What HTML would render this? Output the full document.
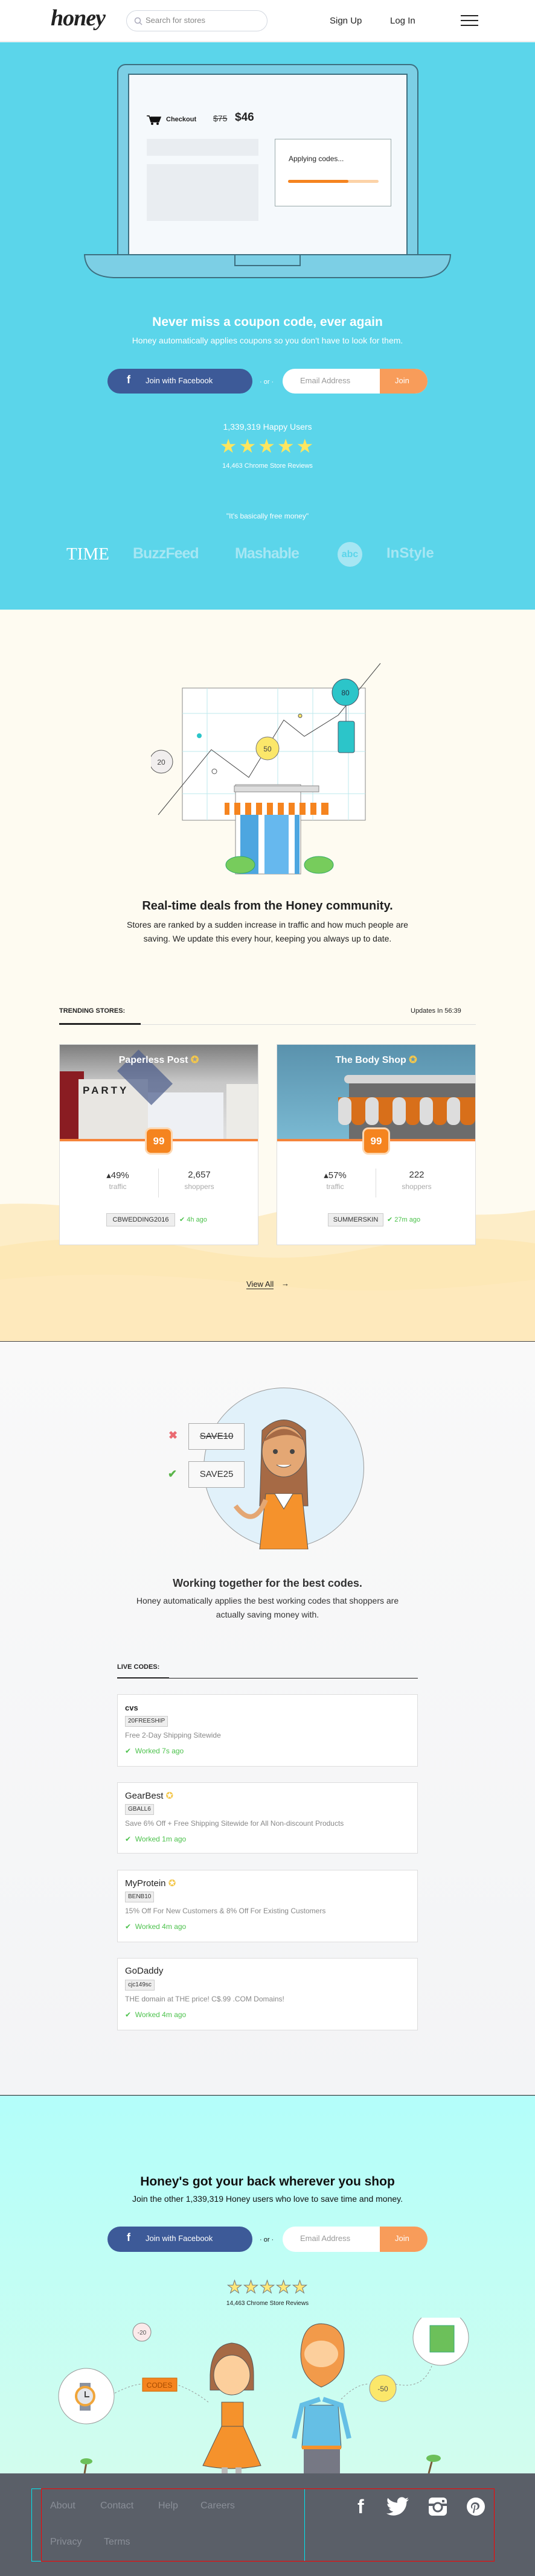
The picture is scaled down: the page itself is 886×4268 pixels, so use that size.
<!DOCTYPE html>
<html><head><meta charset="utf-8"><style>
*{margin:0;padding:0;box-sizing:border-box}
body{width:886px;height:4268px;position:relative;font-family:"Liberation Sans",sans-serif;background:#fff;overflow:hidden;color:#333}
.a{position:absolute}
.c{text-align:center;left:0;width:886px}
</style></head><body>

<!-- HEADER -->
<div class="a" style="left:0;top:0;width:886px;height:69px;background:#fff;border-bottom:1px solid #e2e2e2"></div>
<div class="a" style="left:84px;top:8px;font-family:'Liberation Serif',serif;font-style:italic;font-weight:bold;font-size:38px;color:#222;letter-spacing:-1px">honey</div>
<div class="a" style="left:209px;top:17px;width:234px;height:35px;border:1px solid #d3d8e0;border-radius:18px"></div>
<svg class="a" style="left:222px;top:28px" width="14" height="14"><circle cx="6" cy="6" r="4.5" fill="none" stroke="#aab" stroke-width="1.5"/><line x1="9" y1="9" x2="13" y2="13" stroke="#aab" stroke-width="1.5"/></svg>
<div class="a" style="left:241px;top:26px;font-size:13px;color:#888">Search for stores</div>
<div class="a" style="left:546px;top:26px;font-size:15px;color:#222">Sign Up</div>
<div class="a" style="left:646px;top:26px;font-size:15px;color:#222">Log In</div>
<div class="a" style="left:763px;top:25px;width:29px;height:2px;background:#222"></div>
<div class="a" style="left:763px;top:33px;width:29px;height:2px;background:#222"></div>
<div class="a" style="left:763px;top:41px;width:29px;height:2px;background:#222"></div>

<!-- HERO -->
<div class="a" style="left:0;top:70px;width:886px;height:940px;background:#5bd5ea"></div>
<div class="a" style="left:194px;top:106px;width:499px;height:320px;background:#7ccfe5;border:2px solid #3d6f80;border-radius:14px 14px 0 0"></div>
<div class="a" style="left:212px;top:122px;width:463px;height:302px;background:#f5f9fc;border:2px solid #3d6f80;border-bottom:none"></div>
<svg class="a" style="left:138px;top:420px" width="612" height="42"><path d="M2 2 H608 Q606 38 560 40 H50 Q4 38 2 2Z" fill="#7ccfe5" stroke="#3d6f80" stroke-width="2"/><rect x="251" y="2" width="108" height="18" fill="#7ccfe5" stroke="#3d6f80" stroke-width="2"/></svg>
<svg class="a" style="left:243px;top:190px" width="24" height="18"><path d="M0 2h4l3 10h13l3-8H6" fill="#111" stroke="#111" stroke-width="1.5"/><circle cx="9" cy="15" r="2" fill="#111"/><circle cx="18" cy="15" r="2" fill="#111"/></svg>
<div class="a" style="left:275px;top:192px;font-size:11px;font-weight:bold;color:#222">Checkout</div>
<div class="a" style="left:353px;top:188px;font-size:14px;color:#333;text-decoration:line-through">$75</div>
<div class="a" style="left:389px;top:184px;font-size:19px;font-weight:bold;color:#222">$46</div>
<div class="a" style="left:243px;top:230px;width:185px;height:28px;background:#e9edf1"></div>
<div class="a" style="left:243px;top:272px;width:185px;height:94px;background:#e9edf1"></div>
<div class="a" style="left:455px;top:230px;width:193px;height:112px;background:#fff;border:1px solid #9aa"></div>
<div class="a" style="left:478px;top:256px;font-size:12px;color:#222">Applying codes...</div>
<div class="a" style="left:477px;top:298px;width:150px;height:5px;background:#fcd3a8;border-radius:3px"></div>
<div class="a" style="left:477px;top:298px;width:100px;height:5px;background:#f5841f;border-radius:3px"></div>

<div class="a c" style="top:522px;font-size:21px;font-weight:bold;color:#fff">Never miss a coupon code, ever again</div>
<div class="a c" style="top:556px;font-size:14px;color:#fff">Honey automatically applies coupons so you don't have to look for them.</div>
<div class="a" style="left:178px;top:611px;width:240px;height:41px;background:#3d5a98;border-radius:21px"></div>
<div class="a" style="left:210px;top:619px;font-size:18px;font-weight:bold;color:#fff">f</div>
<div class="a" style="left:241px;top:623px;font-size:13px;color:#fff">Join with Facebook</div>
<div class="a" style="left:430px;top:627px;font-size:11px;color:#fff">· or ·</div>
<div class="a" style="left:468px;top:611px;width:240px;height:41px;background:#fff;border-radius:21px;overflow:hidden"><div style="position:absolute;right:0;top:0;width:79px;height:41px;background:#f89c5a"></div></div>
<div class="a" style="left:497px;top:623px;font-size:13px;color:#999">Email Address</div>
<div class="a" style="left:654px;top:623px;font-size:13px;color:#fff">Join</div>
<div class="a c" style="top:699px;font-size:14px;color:#fff">1,339,319 Happy Users</div>
<div class="a c" style="top:722px;font-size:32px;color:#fde65f;letter-spacing:3px;line-height:34px">★★★★★</div>
<div class="a c" style="top:766px;font-size:11px;color:#fff">14,463 Chrome Store Reviews</div>
<div class="a c" style="top:848px;font-size:12px;color:#fff">"It's basically free money"</div>
<div class="a" style="left:110px;top:902px;font-family:'Liberation Serif',serif;font-size:29px;color:#fff">TIME</div>
<div class="a" style="left:220px;top:903px;font-size:25px;font-weight:bold;color:#a6e6f3;letter-spacing:-1px">BuzzFeed</div>
<div class="a" style="left:389px;top:903px;font-size:25px;font-weight:bold;color:#a6e6f3;letter-spacing:-1px">Mashable</div>
<div class="a" style="left:559px;top:898px;width:41px;height:41px;border-radius:50%;background:#a6e6f3;color:#5bd5ea;font-weight:bold;font-size:16px;text-align:center;line-height:41px">abc</div>
<div class="a" style="left:640px;top:903px;font-size:24px;font-weight:bold;color:#a6e6f3">InStyle</div>

<!-- SECTION 2 -->
<div class="a" style="left:0;top:1010px;width:886px;height:1213px;background:#fefbf1"></div>
<svg class="a" style="left:0;top:1980px" width="886" height="243"><path d="M0 15 Q120 10 230 40 Q330 60 450 30 Q560 5 680 25 Q800 40 886 25 V243 H0Z" fill="#fdedc7"/><path d="M0 85 Q150 60 300 85 Q450 120 600 90 Q750 60 886 80 V243 H0Z" fill="#fde8b6"/><path d="M0 140 Q200 120 450 150 Q650 170 886 140 V243 H0Z" fill="#fee9bc"/></svg>
<svg class="a" style="left:250px;top:1090px" width="400" height="370">
<rect x="52" y="50" width="303" height="219" fill="#fff" stroke="#888" stroke-width="1"/>
<g stroke="#bde9ee" stroke-width="1"><line x1="93" y1="50" x2="93" y2="269"/><line x1="210" y1="50" x2="210" y2="269"/><line x1="268" y1="50" x2="268" y2="269"/><line x1="327" y1="50" x2="327" y2="269"/><line x1="52" y1="92" x2="355" y2="92"/><line x1="52" y1="155" x2="355" y2="155"/><line x1="52" y1="225" x2="355" y2="225"/></g>
<polyline points="12,260 100,152 162,198 220,103 254,130 310,95 380,9" fill="none" stroke="#444" stroke-width="1"/>
<circle cx="17" cy="172" r="19" fill="#f1eeee" stroke="#555"/><text x="17" y="177" font-size="12" text-anchor="middle" fill="#444" font-family="Liberation Sans">20</text>
<circle cx="193" cy="150" r="19" fill="#fbe76a" stroke="#777"/><text x="193" y="155" font-size="12" text-anchor="middle" fill="#444" font-family="Liberation Sans">50</text>
<circle cx="322" cy="57" r="22" fill="#2cc5c9" stroke="#456"/><text x="322" y="62" font-size="12" text-anchor="middle" fill="#234" font-family="Liberation Sans">80</text>
<rect x="310" y="105" width="27" height="52" rx="3" fill="#2cc5c9" stroke="#456"/><line x1="323" y1="79" x2="323" y2="105" stroke="#456"/>
<circle cx="80" cy="129" r="4" fill="#2cc5c9"/><circle cx="105" cy="188" r="4" fill="none" stroke="#555"/><circle cx="247" cy="96" r="3" fill="#fbe76a" stroke="#555"/>
<rect x="140" y="210" width="108" height="148" fill="#fff" stroke="#888"/>
<rect x="148" y="260" width="30" height="98" fill="#4da6e0"/><rect x="188" y="260" width="40" height="98" fill="#66b8ee"/><rect x="238" y="260" width="8" height="98" fill="#4da6e0"/>
<rect x="122" y="240" width="172" height="20" fill="#f5841f"/>
<g fill="#fff"><rect x="130" y="240" width="8" height="20"/><rect x="148" y="240" width="8" height="20"/><rect x="166" y="240" width="8" height="20"/><rect x="184" y="240" width="8" height="20"/><rect x="202" y="240" width="8" height="20"/><rect x="220" y="240" width="8" height="20"/><rect x="238" y="240" width="8" height="20"/><rect x="256" y="240" width="8" height="20"/><rect x="274" y="240" width="8" height="20"/></g>
<rect x="138" y="212" width="140" height="10" fill="#ddd" stroke="#888"/>
<ellipse cx="148" cy="343" rx="24" ry="14" fill="#77cc5c" stroke="#3a6"/><ellipse cx="278" cy="343" rx="24" ry="14" fill="#77cc5c" stroke="#3a6"/>
</svg>
<div class="a c" style="top:1490px;font-size:20px;font-weight:bold;color:#222">Real-time deals from the Honey community.</div>
<div class="a" style="left:193px;top:1521px;width:500px;text-align:center;font-size:14px;line-height:23px;color:#222">Stores are ranked by a sudden increase in traffic and how much people are saving. We update this every hour, keeping you always up to date.</div>
<div class="a" style="left:98px;top:1669px;font-size:11px;font-weight:bold;color:#222">TRENDING STORES:</div>
<div class="a" style="left:680px;top:1669px;font-size:11px;color:#222">Updates In 56:39</div>
<div class="a" style="left:98px;top:1697px;width:690px;height:1px;background:#ddd"></div>
<div class="a" style="left:98px;top:1695px;width:135px;height:3px;background:#222"></div>

<div class="a" style="left:98px;top:1730px;width:330px;height:333px;background:#fff;border:1px solid #ddd"></div>
<div class="a" style="left:99px;top:1731px;width:328px;height:156px;background:linear-gradient(#7d7d7d,#c8c8c8 40%,#e0e0e0)"></div>
<div class="a" style="left:99px;top:1775px;width:40px;height:112px;background:#8a1c22"></div>
<div class="a" style="left:130px;top:1788px;width:115px;height:99px;background:#e8e6e2"></div>
<div class="a" style="left:137px;top:1797px;font-size:17px;font-weight:bold;color:#222;letter-spacing:4px">PARTY</div>
<div class="a" style="left:245px;top:1810px;width:125px;height:77px;background:#eef0f4"></div>
<div class="a" style="left:200px;top:1760px;width:80px;height:50px;background:#4a5b8a;opacity:.7;transform:rotate(45deg)"></div>
<div class="a" style="left:375px;top:1796px;width:52px;height:91px;background:#ecebe7"></div>
<div class="a" style="left:99px;top:1746px;width:328px;text-align:center;font-size:16px;font-weight:bold;color:#fff">Paperless Post <span style="color:#f3c74c">✪</span></div>
<div class="a" style="left:99px;top:1887px;width:328px;height:4px;background:#f5843a"></div>

<div class="a" style="left:458px;top:1730px;width:330px;height:333px;background:#fff;border:1px solid #ddd"></div>
<div class="a" style="left:459px;top:1731px;width:328px;height:156px;background:linear-gradient(#5a92ad,#7ab9d2)"></div>
<div class="a" style="left:578px;top:1790px;width:209px;height:97px;background:#6c6c6c"></div>
<div class="a" style="left:570px;top:1781px;width:217px;height:14px;background:#d7d7d7;border-radius:7px 0 0 7px"></div>
<svg class="a" style="left:560px;top:1818px" width="227" height="46"><g><rect x="0" y="0" width="227" height="30" fill="#d86f1a"/><g fill="#ddd"><rect x="0" y="0" width="22" height="46" rx="10"/><rect x="45" y="0" width="22" height="46" rx="10"/><rect x="90" y="0" width="22" height="46" rx="10"/><rect x="135" y="0" width="22" height="46" rx="10"/><rect x="180" y="0" width="22" height="46" rx="10"/></g><g fill="#d86f1a"><rect x="22" y="0" width="23" height="46" rx="10"/><rect x="67" y="0" width="23" height="46" rx="10"/><rect x="112" y="0" width="23" height="46" rx="10"/><rect x="157" y="0" width="23" height="46" rx="10"/><rect x="202" y="0" width="25" height="46" rx="10"/></g></g></svg>
<div class="a" style="left:459px;top:1746px;width:328px;text-align:center;font-size:16px;font-weight:bold;color:#fff">The Body Shop <span style="color:#f3c74c">✪</span></div>
<div class="a" style="left:459px;top:1887px;width:328px;height:4px;background:#f5843a"></div>

<div class="a" style="left:240px;top:1868px;width:46px;height:45px;background:#f5841f;border:3px solid #fcd6b0;border-radius:10px;color:#fff;font-size:17px;font-weight:bold;text-align:center;line-height:39px">99</div>
<div class="a" style="left:600px;top:1868px;width:46px;height:45px;background:#f5841f;border:3px solid #fcd6b0;border-radius:10px;color:#fff;font-size:17px;font-weight:bold;text-align:center;line-height:39px">99</div>

<div class="a" style="left:160px;top:1938px;width:70px;text-align:center;font-size:15px;color:#333">▴49%</div>
<div class="a" style="left:160px;top:1959px;width:70px;text-align:center;font-size:12px;color:#aaa">traffic</div>
<div class="a" style="left:262px;top:1936px;width:1px;height:48px;background:#ddd"></div>
<div class="a" style="left:290px;top:1938px;width:80px;text-align:center;font-size:15px;color:#333">2,657</div>
<div class="a" style="left:290px;top:1959px;width:80px;text-align:center;font-size:12px;color:#aaa">shoppers</div>
<div class="a" style="left:176px;top:2010px;width:114px;height:22px;background:#eee;border:1px solid #ccc;font-size:11px;text-align:center;line-height:20px;color:#333">CBWEDDING2016</div>
<div class="a" style="left:297px;top:2014px;font-size:11px;color:#4cc24c">✔ 4h ago</div>

<div class="a" style="left:520px;top:1938px;width:70px;text-align:center;font-size:15px;color:#333">▴57%</div>
<div class="a" style="left:520px;top:1959px;width:70px;text-align:center;font-size:12px;color:#aaa">traffic</div>
<div class="a" style="left:622px;top:1936px;width:1px;height:48px;background:#ddd"></div>
<div class="a" style="left:650px;top:1938px;width:80px;text-align:center;font-size:15px;color:#333">222</div>
<div class="a" style="left:650px;top:1959px;width:80px;text-align:center;font-size:12px;color:#aaa">shoppers</div>
<div class="a" style="left:543px;top:2010px;width:92px;height:22px;background:#eee;border:1px solid #ccc;font-size:11px;text-align:center;line-height:20px;color:#333">SUMMERSKIN</div>
<div class="a" style="left:641px;top:2014px;font-size:11px;color:#4cc24c">✔ 27m ago</div>

<div class="a" style="left:408px;top:2120px;font-size:13px;color:#222;border-bottom:1px solid #222">View All</div>
<div class="a" style="left:466px;top:2119px;font-size:13px;color:#222">→</div>

<!-- SECTION 3 -->
<div class="a" style="left:0;top:2222px;width:886px;height:1249px;background:linear-gradient(#f9f9f9,#f3f4f6);border-top:1px solid #444"></div>
<div class="a" style="left:337px;top:2299px;width:266px;height:266px;border-radius:50%;background:#e1f1fa;border:1px solid #999"></div>
<svg class="a" style="left:370px;top:2335px" width="200" height="232">
<path d="M64 35 Q100 0 136 35 L140 160 L60 160Z" fill="#a66a45" stroke="#555"/>
<ellipse cx="100" cy="70" rx="36" ry="42" fill="#e4a774" stroke="#555"/>
<path d="M64 55 Q100 10 136 55 Q110 30 64 55Z" fill="#a66a45"/>
<circle cx="86" cy="70" r="4" fill="#444"/><circle cx="114" cy="70" r="4" fill="#444"/>
<path d="M88 92 Q100 100 112 92" fill="#fff" stroke="#444"/>
<path d="M70 140 L130 140 L140 232 L60 232Z" fill="#f5922c" stroke="#555"/>
<path d="M85 140 L100 165 L115 140" fill="#fff" stroke="#555"/>
<path d="M70 150 Q50 200 20 160" fill="none" stroke="#e4a774" stroke-width="8"/>
</svg>
<div class="a" style="left:312px;top:2358px;width:93px;height:44px;background:#f8f8f8;border:1px solid #aaa;font-size:15px;text-align:center;line-height:42px;color:#333;text-decoration:line-through">SAVE10</div>
<div class="a" style="left:312px;top:2421px;width:93px;height:44px;background:#f8f8f8;border:1px solid #aaa;font-size:15px;text-align:center;line-height:42px;color:#333">SAVE25</div>
<div class="a" style="left:279px;top:2368px;font-size:18px;color:#ea6b72;font-weight:bold">✖</div>
<div class="a" style="left:278px;top:2432px;font-size:18px;color:#5bb54b;font-weight:bold">✔</div>
<div class="a c" style="top:2613px;font-size:18px;font-weight:bold;color:#333">Working together for the best codes.</div>
<div class="a" style="left:223px;top:2641px;width:440px;text-align:center;font-size:14px;line-height:23px;color:#333">Honey automatically applies the best working codes that shoppers are actually saving money with.</div>
<div class="a" style="left:194px;top:2756px;font-size:11px;font-weight:bold;color:#222">LIVE CODES:</div>
<div class="a" style="left:194px;top:2780px;width:498px;height:1px;background:#222"></div>
<div class="a" style="left:194px;top:2779px;width:86px;height:2px;background:#222"></div>

<div class="a" style="left:194px;top:2807px;width:498px;height:120px;background:#fff;border:1px solid #ddd"></div>
<div class="a" style="left:207px;top:2822px;font-size:13px;font-weight:bold;color:#222">cvs</div>
<div class="a" style="left:207px;top:2843px;height:18px;padding:0 4px;background:#eee;border:1px solid #ccc;font-size:10px;line-height:16px;color:#333">20FREESHIP</div>
<div class="a" style="left:207px;top:2868px;font-size:12px;color:#888">Free 2-Day Shipping Sitewide</div>
<div class="a" style="left:207px;top:2894px;font-size:12px;color:#4cc24c">✔ &nbsp;Worked 7s ago</div>

<div class="a" style="left:194px;top:2953px;width:498px;height:118px;background:#fff;border:1px solid #ddd"></div>
<div class="a" style="left:207px;top:2966px;font-size:15px;color:#222">GearBest <span style="color:#f3c74c">✪</span></div>
<div class="a" style="left:207px;top:2989px;height:18px;padding:0 4px;background:#eee;border:1px solid #ccc;font-size:10px;line-height:16px;color:#333">GBALL6</div>
<div class="a" style="left:207px;top:3014px;font-size:12px;color:#888">Save 6% Off + Free Shipping Sitewide for All Non-discount Products</div>
<div class="a" style="left:207px;top:3040px;font-size:12px;color:#4cc24c">✔ &nbsp;Worked 1m ago</div>

<div class="a" style="left:194px;top:3098px;width:498px;height:120px;background:#fff;border:1px solid #ddd"></div>
<div class="a" style="left:207px;top:3111px;font-size:15px;color:#222">MyProtein <span style="color:#f3c74c">✪</span></div>
<div class="a" style="left:207px;top:3134px;height:18px;padding:0 4px;background:#eee;border:1px solid #ccc;font-size:10px;line-height:16px;color:#333">BENB10</div>
<div class="a" style="left:207px;top:3159px;font-size:12px;color:#888">15% Off For New Customers &amp; 8% Off For Existing Customers</div>
<div class="a" style="left:207px;top:3185px;font-size:12px;color:#4cc24c">✔ &nbsp;Worked 4m ago</div>

<div class="a" style="left:194px;top:3244px;width:498px;height:120px;background:#fff;border:1px solid #ddd"></div>
<div class="a" style="left:207px;top:3257px;font-size:15px;color:#222">GoDaddy</div>
<div class="a" style="left:207px;top:3280px;height:18px;padding:0 4px;background:#eee;border:1px solid #ccc;font-size:10px;line-height:16px;color:#333">cjc149sc</div>
<div class="a" style="left:207px;top:3305px;font-size:12px;color:#888">THE domain at THE price! C$.99 .COM Domains!</div>
<div class="a" style="left:207px;top:3331px;font-size:12px;color:#4cc24c">✔ &nbsp;Worked 4m ago</div>

<!-- SECTION 4 -->
<div class="a" style="left:0;top:3471px;width:886px;height:627px;background:linear-gradient(#b3fefa,#d2fdee);border-top:1px solid #222"></div>
<div class="a c" style="top:3603px;font-size:21px;font-weight:bold;color:#111">Honey's got your back wherever you shop</div>
<div class="a c" style="top:3635px;font-size:14px;color:#111">Join the other 1,339,319 Honey users who love to save time and money.</div>
<div class="a" style="left:178px;top:3689px;width:240px;height:42px;background:#3d5a98;border-radius:21px"></div>
<div class="a" style="left:210px;top:3697px;font-size:18px;font-weight:bold;color:#fff">f</div>
<div class="a" style="left:241px;top:3701px;font-size:13px;color:#fff">Join with Facebook</div>
<div class="a" style="left:430px;top:3705px;font-size:11px;color:#111">· or ·</div>
<div class="a" style="left:468px;top:3689px;width:240px;height:42px;background:#fff;border-radius:21px;overflow:hidden"><div style="position:absolute;right:0;top:0;width:79px;height:42px;background:#f89c5a"></div></div>
<div class="a" style="left:497px;top:3701px;font-size:13px;color:#999">Email Address</div>
<div class="a" style="left:654px;top:3701px;font-size:13px;color:#fff">Join</div>
<div class="a c" style="top:3774px;font-size:29px;color:#fde87a;letter-spacing:1px;line-height:32px;-webkit-text-stroke:1px #777">★★★★★</div>
<div class="a c" style="top:3811px;font-size:10px;color:#222">14,463 Chrome Store Reviews</div>

<svg class="a" style="left:0;top:3840px" width="886" height="258">
<path d="M190 125 Q220 110 236 110 M290 110 Q320 120 345 140" fill="none" stroke="#999" stroke-dasharray="3 3"/>
<path d="M565 135 Q590 110 610 110 M655 110 Q700 120 715 80" fill="none" stroke="#999" stroke-dasharray="3 3"/>
<circle cx="143" cy="130" r="46" fill="#fff" stroke="#999"/>
<rect x="132" y="108" width="18" height="46" fill="#8a92a0"/><circle cx="141" cy="130" r="15" fill="#e4e6ea" stroke="#f0a53a" stroke-width="4"/><path d="M141 122 V131 H148" stroke="#444" stroke-width="2" fill="none"/>
<circle cx="730" cy="33" r="46" fill="#fff" stroke="#999"/>
<rect x="712" y="13" width="40" height="44" fill="#6cc05a" stroke="#3a7"/>
<circle cx="235" cy="24" r="15" fill="#fbeaea" stroke="#888"/><text x="235" y="28" font-size="10" text-anchor="middle" fill="#555" font-family="Liberation Sans">-20</text>
<circle cx="634" cy="117" r="22" fill="#fbe76a" stroke="#999"/><text x="634" y="122" font-size="12" text-anchor="middle" fill="#555" font-family="Liberation Sans">-50</text>
<rect x="236" y="100" width="57" height="22" fill="#f5841f" stroke="#c60"/><text x="264" y="116" font-size="12" text-anchor="middle" fill="#a54a00" font-family="Liberation Sans">CODES</text>
<path d="M348 95 Q350 45 384 42 Q420 45 420 95 L420 120 L348 120Z" fill="#a66a45" stroke="#555"/>
<ellipse cx="384" cy="95" rx="30" ry="33" fill="#fccf9c" stroke="#555"/>
<path d="M355 75 Q384 45 413 75 L413 65 Q384 35 355 65Z" fill="#a66a45"/>
<rect x="367" y="140" width="36" height="50" fill="#f5922c" stroke="#555"/>
<path d="M367 180 L403 180 L432 245 Q384 255 336 245Z" fill="#f5922c" stroke="#555"/>
<rect x="367" y="248" width="10" height="10" fill="#bbb"/><rect x="390" y="248" width="10" height="10" fill="#bbb"/>
<path d="M498 60 Q500 10 532 10 Q572 12 570 60 Q570 100 532 115 Q498 100 498 60Z" fill="#f29a4a" stroke="#555"/>
<ellipse cx="532" cy="60" rx="28" ry="22" fill="#fccf9c"/>
<path d="M505 145 L560 145 L565 215 L500 215Z" fill="#65bfe5" stroke="#555"/>
<rect x="500" y="212" width="65" height="6" fill="#f5922c"/>
<rect x="503" y="218" width="60" height="40" fill="#767884"/>
<path d="M530 135 L500 145 L487 200 M535 135 L565 145 L578 200" fill="none" stroke="#65bfe5" stroke-width="8"/>
<path d="M140 258 L143 240 M710 258 L716 235" stroke="#7a5a3a" stroke-width="3"/>
<ellipse cx="143" cy="238" rx="10" ry="5" fill="#6cc05a"/><ellipse cx="718" cy="233" rx="12" ry="6" fill="#6cc05a"/>
</svg>

<!-- FOOTER -->
<div class="a" style="left:0;top:4098px;width:886px;height:170px;background:#5a5f68"></div>
<div class="a" style="left:52px;top:4123px;width:453px;height:121px;border:1px solid #00e6f0"></div>
<div class="a" style="left:68px;top:4123px;width:751px;height:121px;border:1px solid #f00"></div>
<div class="a" style="left:83px;top:4143px;font-size:16px;color:#8a8f98">About</div>
<div class="a" style="left:166px;top:4143px;font-size:16px;color:#8a8f98">Contact</div>
<div class="a" style="left:262px;top:4143px;font-size:16px;color:#8a8f98">Help</div>
<div class="a" style="left:332px;top:4143px;font-size:16px;color:#8a8f98">Careers</div>
<div class="a" style="left:83px;top:4203px;font-size:16px;color:#8a8f98">Privacy</div>
<div class="a" style="left:172px;top:4203px;font-size:16px;color:#8a8f98">Terms</div>
<div class="a" style="left:592px;top:4136px;font-size:32px;font-weight:bold;color:#fff;line-height:34px">f</div>
<svg class="a" style="left:640px;top:4137px" width="38" height="32"><path d="M37 4c-1.4.6-2.8 1-4.4 1.2 1.6-1 2.8-2.4 3.3-4.2-1.5.9-3.1 1.5-4.8 1.9C29.6 1.3 27.6.4 25.4.4c-4.2 0-7.6 3.4-7.6 7.6 0 .6.1 1.2.2 1.7C11.7 9.4 6.1 6.4 2.4 1.8c-.7 1.1-1 2.4-1 3.8 0 2.6 1.300 5 3.400 6.300-1.200 0-2.400-.4-3.400-.9v.1c0 3.700 2.600 6.800 6.100 7.500-.6.200-1.300.300-2 .300-.5 0-1 0-1.400-.1 1 3 3.800 5.200 7.100 5.300-2.600 2-5.900 3.300-9.500 3.300-.6 0-1.200 0-1.800-.1 3.400 2.200 7.400 3.400 11.700 3.400 14 0 21.700-11.600 21.700-21.700v-1C34.700 6.900 36 5.600 37 4z" fill="#fff"/></svg>
<svg class="a" style="left:710px;top:4138px" width="30" height="30"><rect x="0" y="0" width="30" height="30" rx="6" fill="#fff"/><rect x="0" y="10" width="30" height="4" fill="#5a5f68"/><circle cx="15" cy="16" r="7" fill="#fff" stroke="#5a5f68" stroke-width="3"/><rect x="22" y="4" width="4" height="4" fill="#5a5f68"/></svg>
<svg class="a" style="left:773px;top:4138px" width="30" height="30"><circle cx="15" cy="15" r="15" fill="#fff"/><path d="M14 8c4 0 7 2.5 7 6 0 3.5-2.3 6-5 6-1.2 0-2-.6-2.3-1.3L12 26l-2-1 2.5-10c-.3-.6-.3-1.8.5-2.3 1-.6 1.6.5 1.3 1.7l-.8 3.3c-.1.9.5 1.5 1.3 1.5 1.8 0 3.2-1.9 3.2-4.4 0-2.4-2-4-4.4-4-3 0-4.7 2.2-4.7 4.4 0 .9.3 1.6.7 2.1l-.9 1.2C7.6 17.5 7 16.3 7 14.8 7 11 10 8 14 8z" fill="#5a5f68"/></svg>
</body></html>
